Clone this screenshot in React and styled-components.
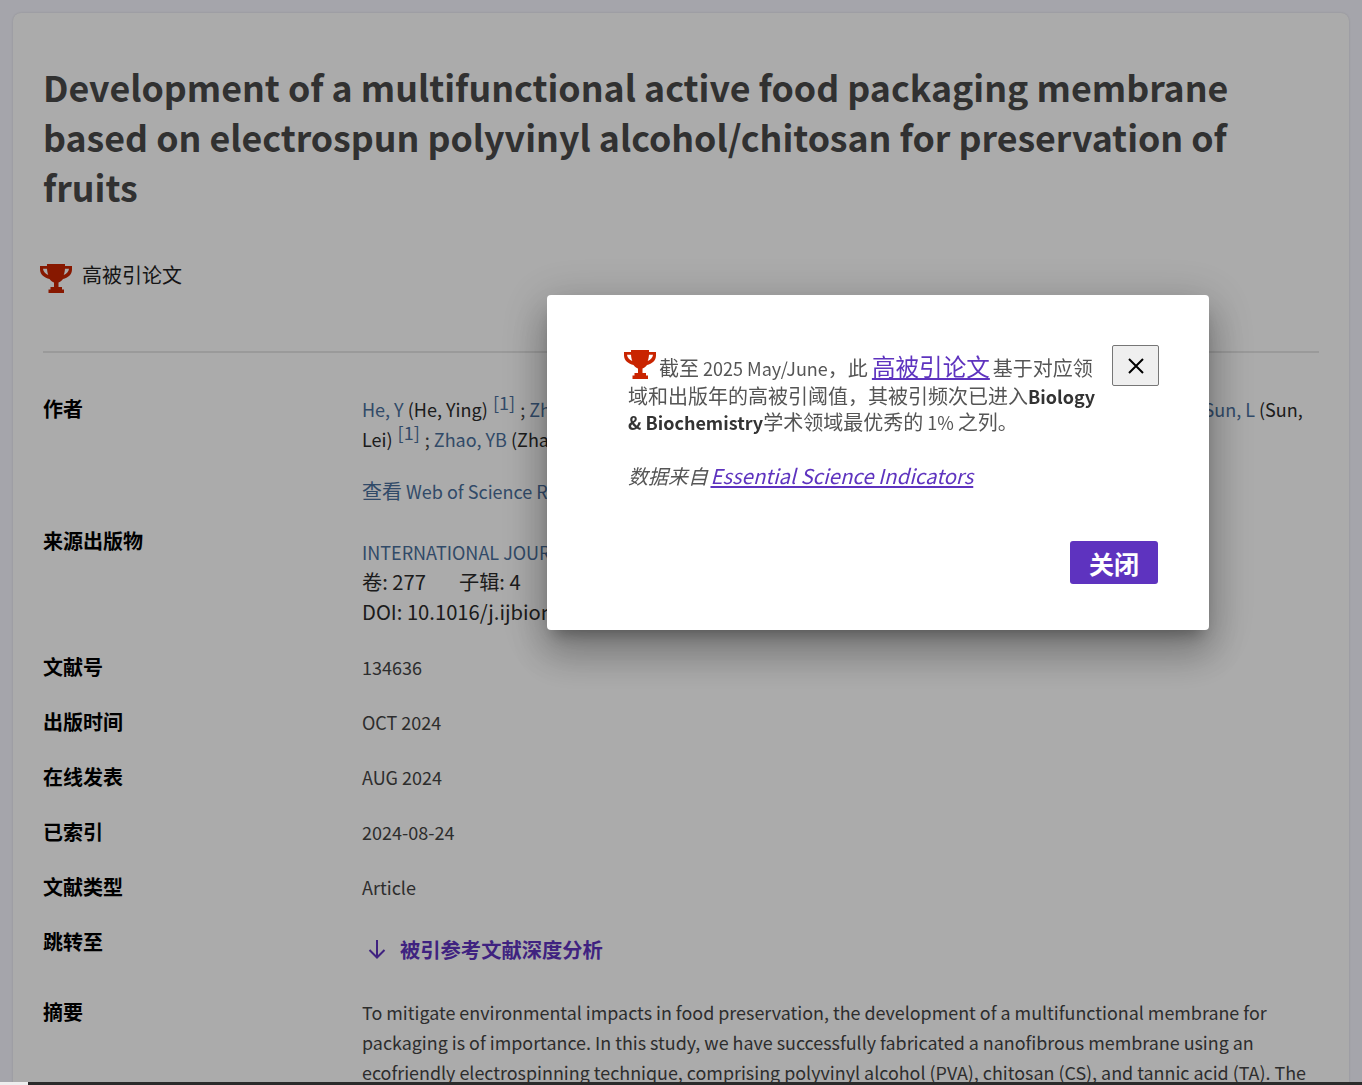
import React from "react";
import styled, { createGlobalStyle } from "styled-components";

const GlobalStyle = createGlobalStyle`
  html, body {
    margin: 0;
    padding: 0;
    height: 1085px;
    overflow: hidden;
    background: #f6f6ff;
    font-family: "Noto Sans CJK SC", "Noto Sans", sans-serif;
    color: #333;
  }
`;

const Page = styled.div`
  padding: 13px 13px 0;
  height: 1085px;
  box-sizing: border-box;
  overflow: hidden;
`;

const Card = styled.main`
  background: #fff;
  border-radius: 8px;
  padding: 49px 30px 0;
  box-shadow: 0 0 2px rgba(0, 0, 0, 0.15);
`;

const Title = styled.h1`
  margin: 0;
  font-size: 35.73px;
  line-height: 50px;
  font-weight: 700;
  color: #4a4a4a;
`;

const Badge = styled.div`
  display: flex;
  align-items: center;
  gap: 10px;
  margin-top: 48px;
  padding-bottom: 61px;
  font-size: 20px;
  line-height: 30px;
  color: #222;
  border-bottom: 2px solid #e6e6e6;
`;

const BadgeIcon = styled.span`
  display: flex;
  margin: 3px 0 -3px -3px;
`;

const Rows = styled.div`
  display: flex;
  flex-direction: column;
  margin-top: 41px;
`;

const Row = styled.div`
  display: grid;
  grid-template-columns: 319px 1fr;
  margin-bottom: ${(p) => p.$gap || 25}px;
`;

const Label = styled.div`
  font-size: 20px;
  line-height: 30px;
  font-weight: 700;
  color: #000;
`;

const Value = styled.div`
  font-size: 18px;
  line-height: 30px;
  color: #444;
`;

const AuthorLines = styled.div`
  white-space: nowrap;
  margin-bottom: 22px;
`;

const Author = styled.a`
  color: #4a6f9c;
`;

const Name = styled.span`
  color: #2a2a2a;
`;

const Sup = styled.sup`
  color: #4a6f9c;
  font-size: 18px;
  line-height: 0;
  margin: 0 1px;
`;

const Cjk = styled.span`
  font-size: 20px;
`;

const Journal = styled.a`
  display: block;
  margin-top: 11px;
  color: #4a6f9c;
`;

const Plain = styled.div`
  color: #2a2a2a;
  font-size: 20.2px;
`;

const Issue = styled.span`
  margin-left: 33px;
`;

const JumpLink = styled.a`
  display: inline-flex;
  align-items: center;
  gap: 13px;
  margin: 7px 0 0 5px;
  font-size: 20.3px;
  font-weight: 700;
  color: #5e33bf;
`;

const Abstract = styled.p`
  margin: 0;
  font-size: 17.9px;
  line-height: 30px;
  color: #444;
`;

const Overlay = styled.div`
  position: fixed;
  inset: 0;
  background: rgba(0, 0, 0, 0.33);
`;

const BottomBar = styled.div`
  position: fixed;
  left: 0;
  right: 0;
  bottom: 0;
  height: 3px;
  background: linear-gradient(90deg, #eeeeee 28px, #2b2b2b 28px);
`;

const Modal = styled.div`
  position: fixed;
  left: 547px;
  top: 295px;
  width: 662px;
  height: 335px;
  box-sizing: border-box;
  padding: 55px 50px 46px 81px;
  background: #fff;
  border-radius: 4px;
  box-shadow: 0 11px 15px -7px rgba(0, 0, 0, 0.3),
    0 24px 38px 3px rgba(0, 0, 0, 0.2), 0 9px 46px 8px rgba(0, 0, 0, 0.16);
  display: flex;
  flex-direction: column;
`;

const ModalTop = styled.div`
  display: flex;
  justify-content: space-between;
  align-items: flex-start;
  flex: 1;
`;

const Message = styled.div`
  width: 468px;
  margin-top: -1px;
  font-size: 18px;
  line-height: 26px;
  color: #555;
`;

const MessageIcon = styled.span`
  margin: 0 3px 0 -4px;

  svg {
    vertical-align: -3px;
  }
`;

const Strong = styled.b`
  color: #333;
  font-weight: 700;
`;

const BigLink = styled.a`
  padding-right: 3px;
  color: #5e33bf;
  font-size: 23.6px;
  line-height: 34px;
  text-decoration: underline;
`;

const Source = styled.div`
  margin-top: 27px;
  font-style: italic;
  font-size: 20px;
`;

const SourceLink = styled.a`
  margin-left: -2px;
  font-size: 20.4px;
  color: #5e33bf;
  text-decoration: underline;
`;

const CloseX = styled.button`
  width: 47px;
  height: 41px;
  margin-top: -5px;
  padding: 0;
  display: flex;
  align-items: center;
  justify-content: center;
  background: #efefef;
  border: 1px solid #767676;
  border-radius: 2px;
`;

const Footer = styled.div`
  display: flex;
  justify-content: flex-end;
`;

const CloseButton = styled.button`
  width: 88px;
  height: 43px;
  margin-right: 1px;
  padding: 0;
  border: 0;
  border-radius: 3px;
  background: #5e33bf;
  color: #fff;
  font-family: inherit;
  font-size: 25px;
  font-weight: 700;
`;

const Trophy = () => (
  <svg width="32" height="29" viewBox="0 0 32 29" fill="#c92400">
    <path d="M7 0h18v2h7v3.500c0 5-4 8.500-9 9.500-1.300 1.700-3 3-4.500 3.500V23h3.500v2.500h2V29H8.500v-3.500h2V23H14v-4.500c-1.500-.5-3.200-1.800-4.500-3.500C4.500 14 0 10.500 0 5.500V2h7V0zM3 4.800c.2 3 2.500 5.200 5.300 6.200C7.500 9.200 7.200 7 7 4.800H3zm26 0h-4c-.2 2.200-.5 4.400-1.300 6.200 2.800-1 5.100-3.200 5.300-6.200z" />
  </svg>
);

const App = () => {
  return (
    <>
      <GlobalStyle />
      <Page>
        <Card>
          <Title>
            Development of a multifunctional active food packaging membrane
            based on electrospun polyvinyl alcohol/chitosan for preservation of
            fruits
          </Title>
          <Badge>
            <BadgeIcon>
              <Trophy />
            </BadgeIcon>
            高被引论文
          </Badge>
          <Rows>
            <Row $gap={20}>
              <Label>作者</Label>
              <Value>
                <AuthorLines>
                  <Author>He, Y</Author> <Name>(He, Ying)</Name> <Sup>[1]</Sup> ;{" "}
                  <Author>Zhu, X</Author> <Name>(Zhu, Xinyu)</Name> <Sup>[1]</Sup> ;{" "}
                  <Author>Wu, J</Author> <Name>(Wu, Jing)</Name> <Sup>[1]</Sup> ;{" "}
                  <Author>Li, H</Author> <Name>(Li, Hao)</Name> <Sup>[1]</Sup> ;{" "}
                  <Author>Xu, Q</Author> <Name>(Xu, Qi)</Name> <Sup>[1]</Sup> ;{" "}
                  <Author>Sun, L</Author> <Name>(Sun,</Name>
                  <br />
                  <Name>Lei)</Name> <Sup>[1]</Sup> ; <Author>Zhao, YB</Author>{" "}
                  <Name>(Zhao, Yibo)</Name>
                </AuthorLines>
                <Author>
                  <Cjk>查看</Cjk> Web of Science ResearcherID
                </Author>
              </Value>
            </Row>
            <Row $gap={25}>
              <Label>来源出版物</Label>
              <Value>
                <Journal>INTERNATIONAL JOURNAL OF BIOLOGICAL</Journal>
                <Plain>
                  卷: 277<Issue>子辑: 4</Issue>
                </Plain>
                <Plain>DOI: 10.1016/j.ijbiomac.2024.134636</Plain>
              </Value>
            </Row>
            <Row><Label>文献号</Label><Value>134636</Value></Row>
            <Row><Label>出版时间</Label><Value>OCT 2024</Value></Row>
            <Row><Label>在线发表</Label><Value>AUG 2024</Value></Row>
            <Row><Label>已索引</Label><Value>2024-08-24</Value></Row>
            <Row><Label>文献类型</Label><Value>Article</Value></Row>
            <Row $gap={31}>
              <Label>跳转至</Label>
              <Value>
                <JumpLink>
                  <svg width="20" height="20" viewBox="0 0 20 20" fill="none" stroke="#5e33bf" strokeWidth="2">
                    <path d="M10 1v17M2.500 11l7.500 7.500 7.500-7.500" />
                  </svg>
                  被引参考文献深度分析
                </JumpLink>
              </Value>
            </Row>
            <Row>
              <Label>摘要</Label>
              <Abstract>
                To mitigate environmental impacts in food preservation, the
                development of a multifunctional membrane for packaging is of
                importance. In this study, we have successfully fabricated a
                nanofibrous membrane using an ecofriendly electrospinning
                technique, comprising polyvinyl alcohol (PVA), chitosan (CS),
                and tannic acid (TA). The
              </Abstract>
            </Row>
          </Rows>
        </Card>
      </Page>
      <Overlay />
      <BottomBar />
      <Modal>
        <ModalTop>
          <Message>
            <MessageIcon>
              <Trophy />
            </MessageIcon>
            <Cjk>截至</Cjk> 2025 May/June<Cjk>，此</Cjk> <BigLink>高被引论文</BigLink>
            <Cjk>基于对应领域和出版年的高被引阈值，其被引频次已进入</Cjk>
            <Strong>Biology &amp; Biochemistry</Strong>
            <Cjk>学术领域最优秀的</Cjk> 1% <Cjk>之列。</Cjk>
            <Source>
              数据来自 <SourceLink>Essential Science Indicators</SourceLink>
            </Source>
          </Message>
          <CloseX aria-label="关闭">
            <svg width="18" height="18" viewBox="0 0 18 18" stroke="#000" strokeWidth="2">
              <path d="M2 2l14 14M16 2L2 16" />
            </svg>
          </CloseX>
        </ModalTop>
        <Footer>
          <CloseButton>关闭</CloseButton>
        </Footer>
      </Modal>
    </>
  );
};

export default App;
